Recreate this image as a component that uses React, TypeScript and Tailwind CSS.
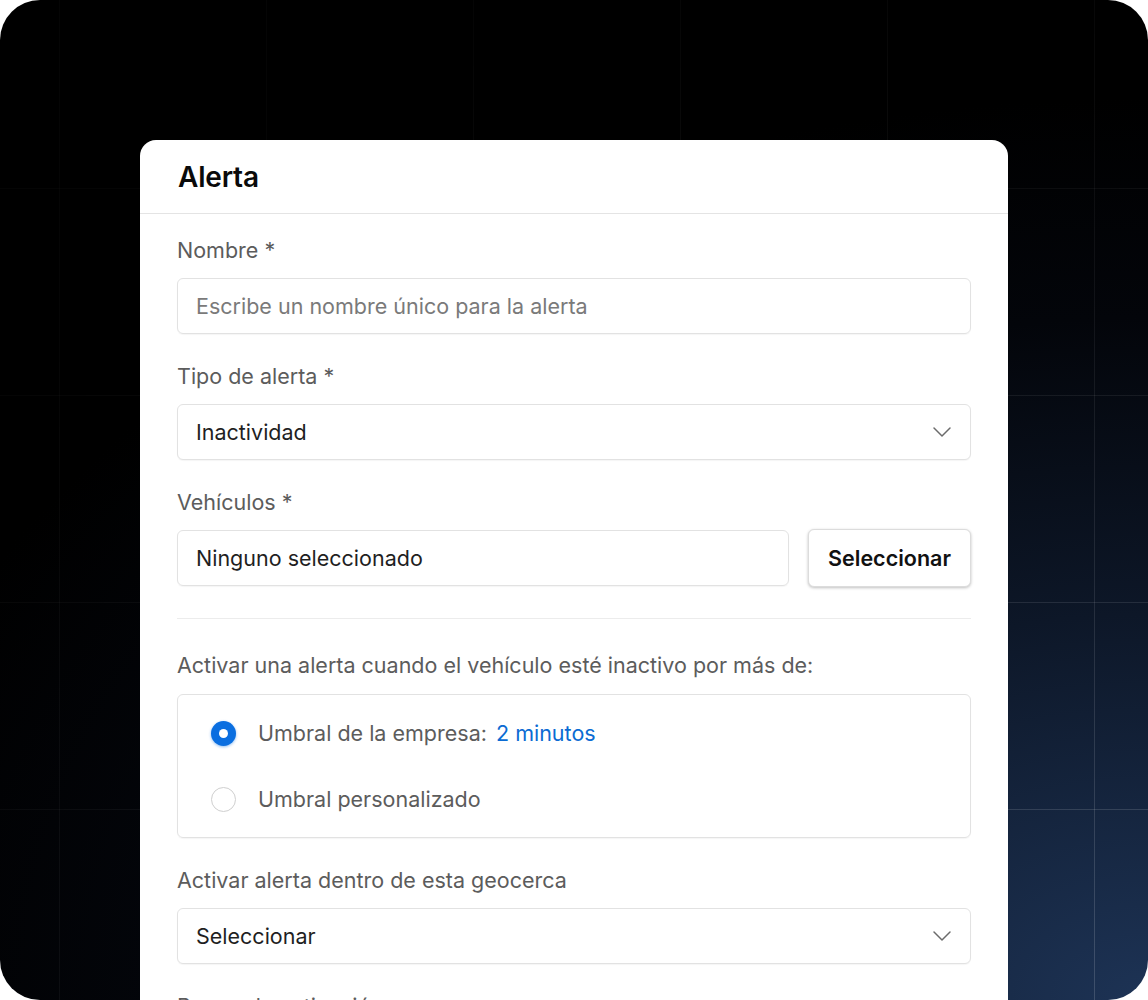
import React from 'react';

const Chevron = () => (
  <svg width="20" height="12" viewBox="0 0 20 12" fill="none" className="shrink-0">
    <path d="M2 2l8 8 8-8" stroke="#6b6b6b" strokeWidth="1.5" strokeLinecap="round" strokeLinejoin="round" />
  </svg>
);

function Field({ label, children }: { label: string; children: React.ReactNode }) {
  return (
    <div className="flex flex-col gap-[14px]">
      <div className="text-[21.5px] leading-[28px] text-[#5c5c5c]">{label}</div>
      {children}
    </div>
  );
}

function Select({ value }: { value: string }) {
  return (
    <div className="h-[56px] flex items-center justify-between pl-[18px] pr-[18px] rounded-[6px] border border-[#e2e2e2] bg-white shadow-[0_1px_1px_rgba(0,0,0,0.04)]">
      <span className="text-[21.5px] text-[#1f1f1f]">{value}</span>
      <Chevron />
    </div>
  );
}

function Radio({ checked, children }: { checked?: boolean; children: React.ReactNode }) {
  return (
    <div className="h-[38px] flex items-center gap-[22px]">
      {checked ? (
        <span className="w-[25px] h-[25px] rounded-full bg-[#0a6ee0] flex items-center justify-center shadow-[0_1px_3px_rgba(10,110,224,0.45)]">
          <span className="w-[9px] h-[9px] rounded-full bg-white" />
        </span>
      ) : (
        <span className="w-[25px] h-[25px] rounded-full border-[1.5px] border-[#cfcfcf] bg-white" />
      )}
      <span className="text-[21.5px] text-[#5c5c5c]">{children}</span>
    </div>
  );
}

export default function App() {
  return (
    <div className="min-h-screen bg-white" style={{ fontFamily: 'Inter, "Noto Sans", sans-serif' }}>
      <div className="relative w-[1148px] h-[1000px] rounded-[40px] overflow-hidden bg-[radial-gradient(140%_110%_at_100%_100%,#1d3355_0%,#0d1728_35%,#03050a_62%,#000_82%)]">
        {/* grid lines */}
        <div
          aria-hidden
          className="absolute inset-0 bg-[linear-gradient(to_right,rgba(255,255,255,0.16)_1px,transparent_1px),linear-gradient(to_bottom,rgba(255,255,255,0.16)_1px,transparent_1px)] [background-size:207px_207px] [background-position:59px_188px] [mask-image:radial-gradient(120%_110%_at_100%_100%,#000_0%,rgba(0,0,0,0.4)_60%,rgba(0,0,0,0.12)_100%)]"
        />

        <div className="relative pt-[140px] px-[140px]">
          <div className="bg-white rounded-t-[16px] h-[860px]">
            <div className="h-[74px] px-[38px] flex items-center border-b-[1.5px] border-[#e4e4e4]">
              <h1 className="text-[28px] font-semibold text-[#0a0a0a] tracking-[-0.2px]">Alerta</h1>
            </div>

            <div className="px-[37px] pt-[22px] flex flex-col">
              <div className="flex flex-col gap-[28px]">
                <Field label="Nombre *">
                  <div className="h-[56px] flex items-center px-[18px] rounded-[6px] border border-[#e2e2e2] shadow-[0_1px_1px_rgba(0,0,0,0.04)]">
                    <span className="text-[21.5px] text-[#7a7a7a]">Escribe un nombre único para la alerta</span>
                  </div>
                </Field>

                <Field label="Tipo de alerta *">
                  <Select value="Inactividad" />
                </Field>

                <Field label="Vehículos *">
                  <div className="flex gap-[19px]">
                    <div className="flex-1 h-[56px] flex items-center px-[18px] rounded-[6px] border border-[#e2e2e2] shadow-[0_1px_1px_rgba(0,0,0,0.04)]">
                      <span className="text-[21.5px] text-[#1f1f1f]">Ninguno seleccionado</span>
                    </div>
                    <button className="w-[163px] h-[58px] -mt-px rounded-[6px] border border-[#dcdcdc] bg-white text-[21.5px] font-semibold text-[#111] shadow-[0_1px_3px_rgba(0,0,0,0.25)]">
                      Seleccionar
                    </button>
                  </div>
                </Field>
              </div>

              <div className="mt-[31px] h-px bg-[#ececec]" />

              <div className="mt-[32px] flex flex-col gap-[15px]">
                <div className="text-[21.5px] leading-[28px] text-[#5c5c5c]">
                  Activar una alerta cuando el vehículo esté inactivo por más de:
                </div>
                <div className="rounded-[6px] border border-[#e2e2e2] px-[33px] py-[19px] flex flex-col gap-[28px] shadow-[0_1px_1px_rgba(0,0,0,0.04)]">
                  <Radio checked>
                    Umbral de la empresa: <span className="ml-[3px] text-[#0b6bd3]">2 minutos</span>
                  </Radio>
                  <Radio>Umbral personalizado</Radio>
                </div>
              </div>

              <div className="mt-[28px] flex flex-col gap-[28px]">
                <Field label="Activar alerta dentro de esta geocerca">
                  <Select value="Seleccionar" />
                </Field>
                <Field label="Rango de activación">
                  <Select value="Seleccionar" />
                </Field>
              </div>
            </div>
          </div>
        </div>
      </div>
    </div>
  );
}
